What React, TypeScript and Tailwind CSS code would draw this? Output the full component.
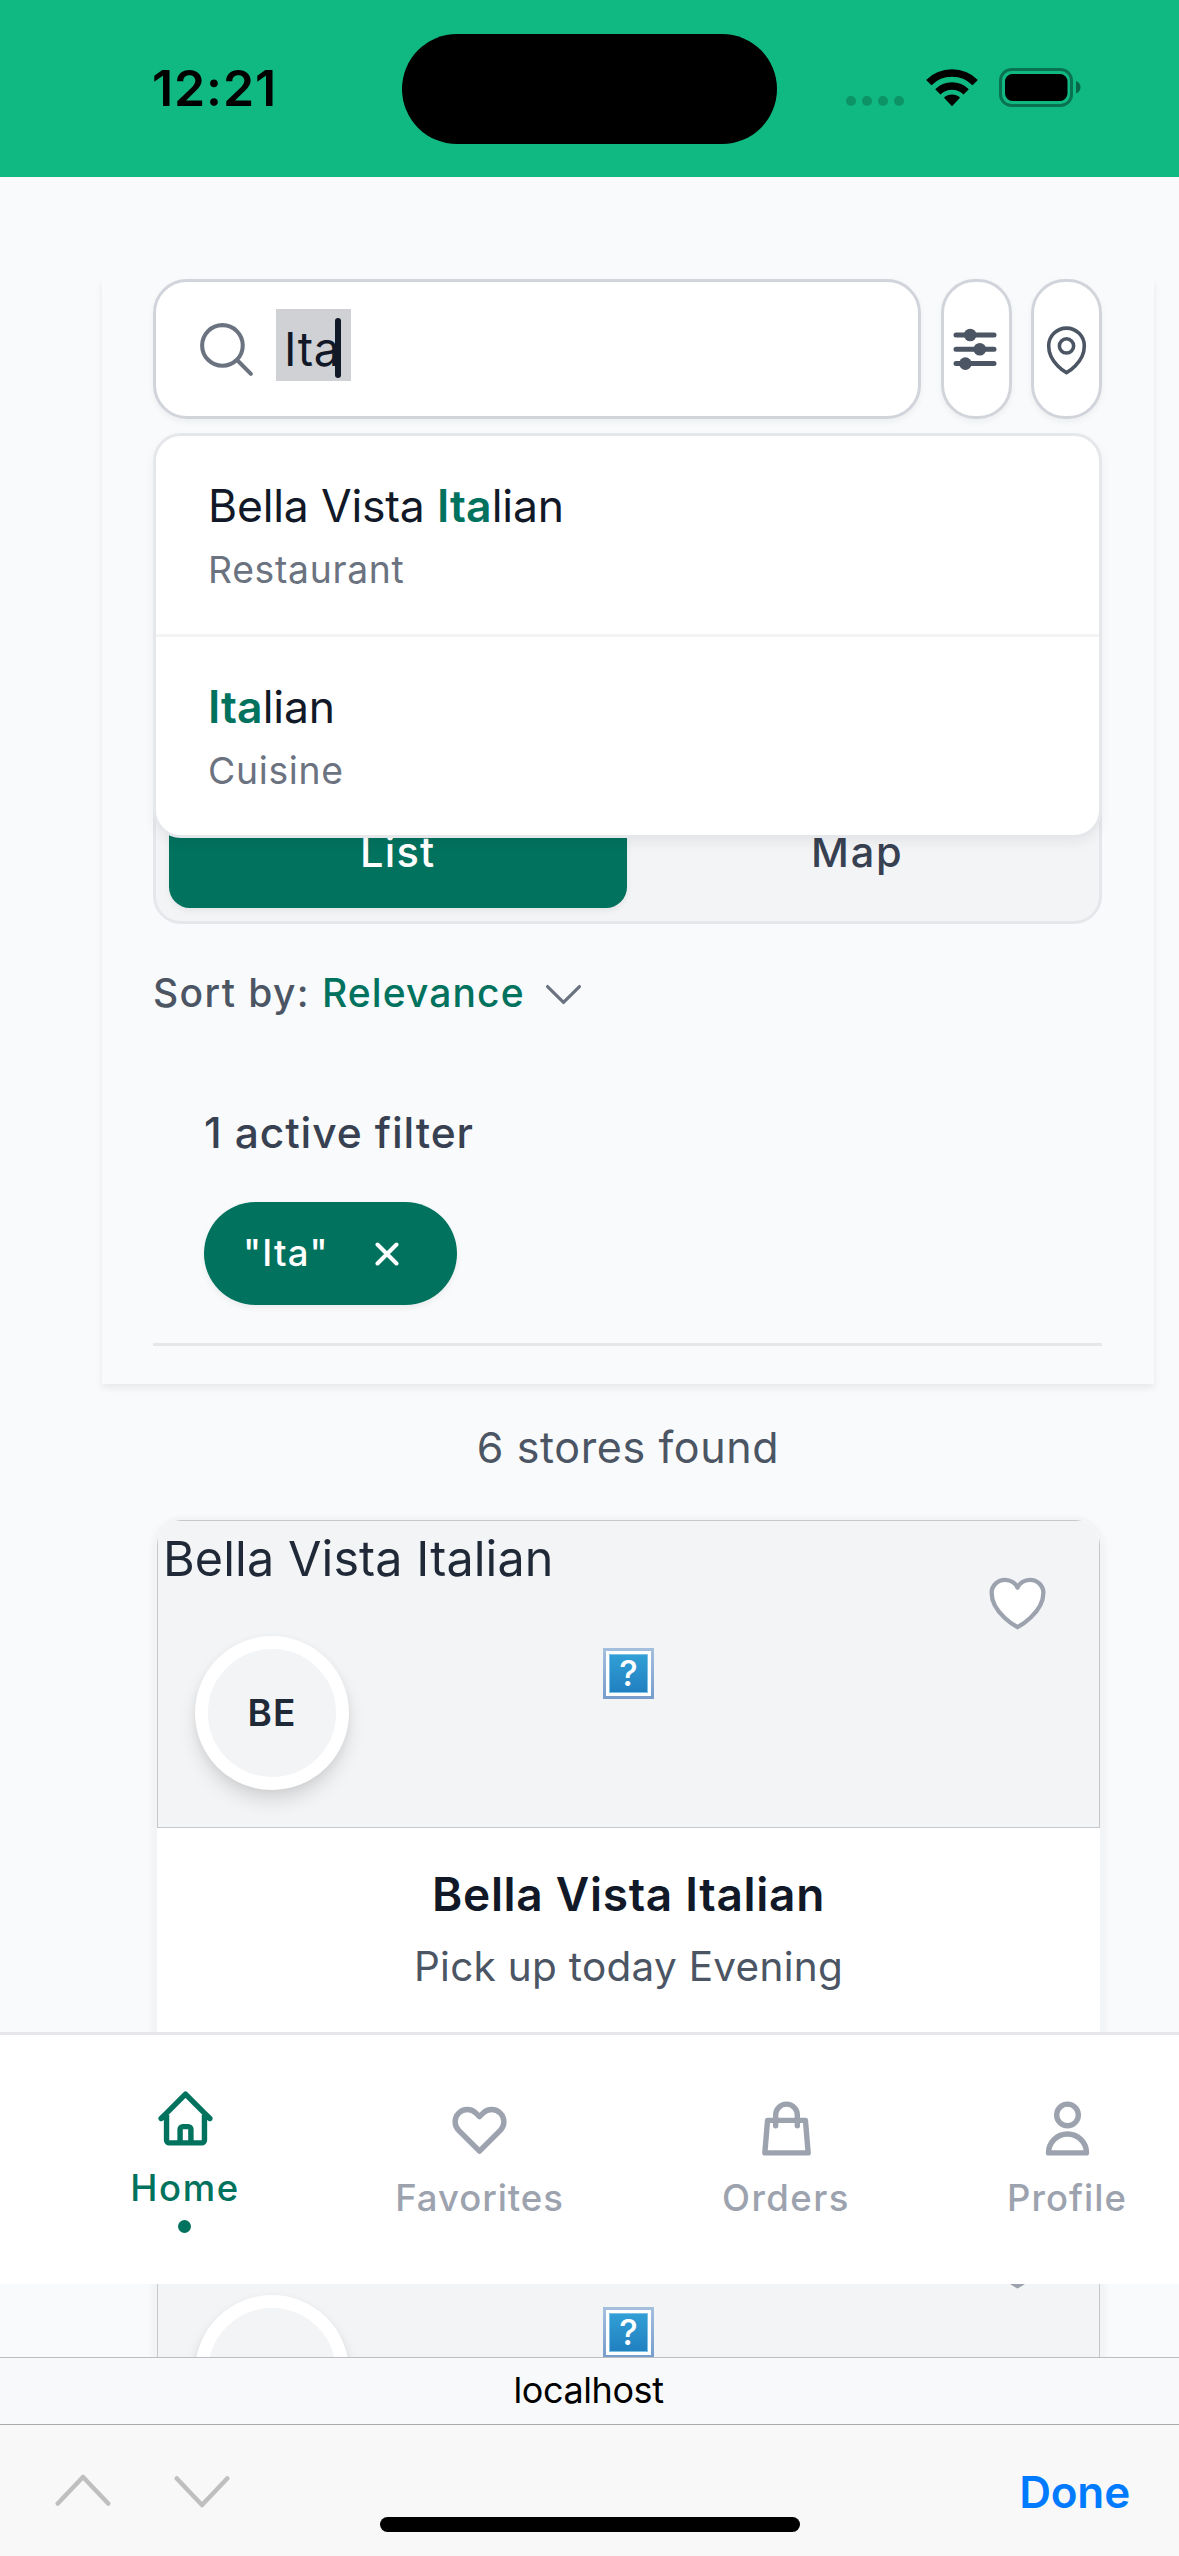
import type { ReactNode } from "react";

/* ---------- Status bar ---------- */

function StatusBar() {
  return (
    <header className="relative flex h-[177px] items-start bg-[#10b981] text-black">
      <span className="mt-[58px] ml-[152px] text-[50px] leading-[60px] font-semibold tracking-[0.9px]">12:21</span>
      <div className="absolute top-[34px] left-[402px] h-[110px] w-[375px] rounded-full bg-black" />
      <div className="mt-[68px] ml-auto flex h-[39px] items-start pr-[98px]">
        <div className="mt-[28px] mr-[22px] flex gap-[6px]">
          {[0, 1, 2, 3].map((i) => (
            <span key={i} className="size-[10px] rounded-full bg-black/20" />
          ))}
        </div>
        <svg width="52" height="38" viewBox="0 0 52 38" fill="none" className="mt-px mr-[21px]">
          <path d="M2.8 13.6A33 33 0 0 1 49.2 13.6" stroke="#000" strokeWidth="7.6" />
          <path d="M11.8 22.8A20.2 20.2 0 0 1 40.2 22.8" stroke="#000" strokeWidth="7.4" />
          <path d="M26 37.2L18 28.8A11.4 11.4 0 0 1 34 28.8Z" fill="#000" />
        </svg>
        <svg width="82" height="39" viewBox="0 0 82 39" fill="none">
          <rect x="1.5" y="1.5" width="71" height="36" rx="11" stroke="#000" strokeOpacity=".38" strokeWidth="3" />
          <rect x="6" y="6" width="62.5" height="27" rx="7.5" fill="#000" />
          <path d="M77 13C80 14 81.5 16.5 81.5 19.2S80 24.5 77 25.5Z" fill="#000" fillOpacity=".45" />
        </svg>
      </div>
    </header>
  );
}

/* ---------- Search ---------- */

function SearchRow() {
  return (
    <div className="flex h-[140px] gap-[19.5px]">
      <div className="flex flex-1 items-center rounded-[34px] border-[3px] border-[#d1d5db] bg-white pl-[38px] shadow-[0_3px_6px_rgba(0,0,0,0.05)]">
        <svg width="65" height="65" viewBox="0 0 24 24" fill="none" stroke="#6b7280" strokeWidth="1.5" strokeLinecap="round" strokeLinejoin="round">
          <path d="m21 21-5.197-5.197m0 0A7.5 7.5 0 1 0 5.196 5.196a7.5 7.5 0 0 0 10.607 10.607Z" />
        </svg>
        <div className="relative mb-[8px] ml-[17px] h-[72px] w-[75px] bg-[#d0d1d5] pl-[8px] text-[46.5px] leading-[80px] tracking-[0.6px] text-[#111827]">
          Ita
          <span className="absolute top-[9px] left-[59px] h-[60px] w-[6px] rounded-full bg-[#111827]" />
        </div>
      </div>
      <button className="flex w-[71px] items-center justify-center rounded-[34px] border-[3px] border-[#d1d5db] bg-white shadow-[0_3px_6px_rgba(0,0,0,0.05)]">
        <svg width="44" height="44" viewBox="0 0 44 44" className="mr-[2px] shrink-0" stroke="#4b5563" strokeWidth="5" strokeLinecap="round" fill="#4b5563">
          <path d="M3 8H41M3 22.3H41M3 36.6H41" />
          <g stroke="none">
            <circle cx="17.2" cy="8" r="6.3" />
            <circle cx="26.8" cy="22.3" r="6.3" />
            <circle cx="12.4" cy="36.6" r="6.3" />
          </g>
        </svg>
      </button>
      <button className="flex w-[71px] items-center justify-center rounded-[34px] border-[3px] border-[#d1d5db] bg-white shadow-[0_3px_6px_rgba(0,0,0,0.05)]">
        <svg width="57" height="57" viewBox="0 0 24 24" className="shrink-0" fill="none" stroke="#4b5563" strokeWidth="1.5" strokeLinecap="round" strokeLinejoin="round">
          <path d="M15 10.5a3 3 0 1 1-6 0 3 3 0 0 1 6 0Z" />
          <path d="M19.5 10.5c0 7.142-7.5 11.25-7.5 11.25S4.5 17.642 4.5 10.5a7.5 7.5 0 1 1 15 0Z" />
        </svg>
      </button>
    </div>
  );
}

function Suggestion({ title, kind }: { title: ReactNode; kind: string }) {
  return (
    <li className="box-content h-[160px] pt-[38px] pl-[52px]">
      <p className="text-[44.5px] leading-[64px] tracking-[-0.2px] text-[#111827]">{title}</p>
      <p className="mt-[5px] text-[37.3px] leading-[54px] tracking-[0.7px] text-[#6b7280]">{kind}</p>
    </li>
  );
}

function Hit({ children }: { children: ReactNode }) {
  return <b className="font-semibold tracking-[0.1px] text-[#00725e]">{children}</b>;
}

function Suggestions() {
  return (
    <ul className="absolute inset-x-0 top-[154px] z-10 divide-y-[3px] divide-[#f3f4f6] rounded-[28px] border-[3px] border-[#e5e7eb] bg-white shadow-[0_6px_12px_rgba(0,0,0,0.05)]">
      <Suggestion title={<>Bella Vista <Hit>Ita</Hit>lian</>} kind="Restaurant" />
      <Suggestion title={<><Hit>Ita</Hit>lian</>} kind="Cuisine" />
    </ul>
  );
}

/* ---------- Filter panel ---------- */

function FilterPanel() {
  return (
    <section className="pr-[52px] pl-[51px] pb-[38px] shadow-[0_4px_7px_rgba(0,0,0,0.07)]">
      <div className="relative">
        <SearchRow />
        <Suggestions />
      </div>

      <div className="mt-[361px] flex h-[144px] rounded-[28px] border-[3px] border-[#e5e7eb] bg-[#f3f4f6] p-[13px] text-[41.5px] leading-[112px] font-medium">
        <button className="flex-1 rounded-[21px] bg-[#00725e] tracking-[1.24px] text-white shadow-[0_3px_6px_rgba(0,0,0,0.06)]">List</button>
        <button className="flex-1 pl-[2px] tracking-[1.8px] text-[#374151]">Map</button>
      </div>

      <div className="mt-[39px] flex h-[60px] items-center text-[39px] leading-[60px] font-medium">
        <span className="tracking-[1.4px] text-[#4b5563]">Sort by:</span>
        <span className="ml-[12px] tracking-[1.1px] text-[#00725e]">Relevance</span>
        <svg width="51" height="51" viewBox="0 0 24 24" className="mt-[2px] ml-[13px]" fill="none" stroke="#6b7280" strokeWidth="1.5" strokeLinecap="round" strokeLinejoin="round">
          <path d="m19.5 8.25-7.5 7.5-7.5-7.5" />
        </svg>
      </div>

      <div className="mt-[80px] border-b-[3px] border-[#e5e7eb] pb-[38px] pl-[51px]">
        <h2 className="text-[42.5px] leading-[60px] font-medium tracking-[0.9px] text-[#374151]">1 active filter</h2>
        <div className="mt-[39px] flex h-[103px] w-[253px] items-center rounded-full bg-[#00725e] pl-[39px] text-white shadow-[0_3px_6px_rgba(0,0,0,0.06)]">
          <span className="text-[36.5px] font-medium tracking-[1.25px]">"Ita"</span>
          <svg width="24" height="24" viewBox="0 0 24 24" className="ml-[46px]" stroke="#fff" strokeWidth="4" strokeLinecap="round">
            <path d="M2.5 2.5L21.5 21.5M21.5 2.5L2.5 21.5" />
          </svg>
        </div>
      </div>
    </section>
  );
}

/* ---------- Store cards ---------- */

function MissingImage() {
  return (
    <div className="mb-[2px] size-[51px] bg-linear-to-b from-[#a5c0df] to-[#769ccb] p-[3px]">
      <div className="size-full bg-white p-[3px]">
        <div className="flex size-full items-center justify-center border border-[#7cc0e4] bg-linear-to-b from-[#329fd6] to-[#2180c0] text-[35px] leading-none font-medium text-white">
          ?
        </div>
      </div>
    </div>
  );
}

function StoreCard({ name, initials, pickup }: { name: string; initials: string; pickup: string }) {
  return (
    <article className="h-[611px] overflow-hidden rounded-[28px] border-[3px] border-[#f3f4f6] bg-white shadow-[0_3px_8px_rgba(0,0,0,0.06)]">
      <div className="relative flex h-[308px] items-center justify-center border border-[#c6c7c9] bg-[#f3f4f6]">
        <span className="absolute top-0 left-[5px] text-[48.5px] leading-[76px] tracking-[0.1px] text-[#1f2937]">{name}</span>
        <MissingImage />
        <svg width="69" height="69" viewBox="0 0 24 24" className="absolute top-[48px] right-[47px]" fill="#fff" stroke="#9ca3af" strokeWidth="1.5" strokeLinecap="round" strokeLinejoin="round">
          <path d="M21 8.25c0-2.485-2.099-4.5-4.688-4.5-1.935 0-3.597 1.126-4.312 2.733-.715-1.607-2.377-2.733-4.313-2.733C5.1 3.75 3 5.765 3 8.25c0 7.22 9 12 9 12s9-4.78 9-12Z" />
        </svg>
        <div className="absolute bottom-[37px] left-[37px] flex size-[154px] items-center justify-center rounded-full border-[13px] border-white bg-[#f3f4f6] text-[37px] font-semibold tracking-[1px] text-[#1f2937] shadow-[0_12px_18px_rgba(0,0,0,0.1),0_3px_9px_rgba(0,0,0,0.06)]">
          {initials}
        </div>
      </div>
      <div className="pt-[36px] text-center">
        <h3 className="text-[46px] leading-[60px] font-semibold tracking-[0.7px] text-[#111827]">{name}</h3>
        <p className="mt-[16px] text-[40.5px] leading-[54px] tracking-[0.28px] text-[#4b5563]">{pickup}</p>
      </div>
    </article>
  );
}

/* ---------- Bottom navigation ---------- */

function NavIcon({ d }: { d: string }) {
  return (
    <svg width="65" height="65" viewBox="0 0 24 24" fill="none" stroke="currentColor" strokeWidth="2" strokeLinecap="round" strokeLinejoin="round">
      <path d={d} />
    </svg>
  );
}

const tabs = [
  {
    label: "Home",
    width: "w-[110px] tracking-[1.62px]",
    d: "M3 12l2-2m0 0l7-7 7 7M5 10v10a1 1 0 001 1h3m10-11l2 2m-2-2v10a1 1 0 01-1 1h-3m-6 0a1 1 0 001-1v-4a1 1 0 011-1h2a1 1 0 011 1v4a1 1 0 001 1m-6 0h6",
    active: true,
  },
  {
    label: "Favorites",
    width: "w-[168px] pr-[3px] tracking-[0.94px]",
    d: "M4.318 6.318a4.5 4.5 0 000 6.364L12 20.364l7.682-7.682a4.5 4.5 0 00-6.364-6.364L12 7.636l-1.318-1.318a4.5 4.5 0 00-6.364 0z",
  },
  { label: "Orders", width: "w-[128px] tracking-[1.44px]", d: "M16 11V7a4 4 0 00-8 0v4M5 9h14l1 12H4L5 9z" },
  {
    label: "Profile",
    width: "w-[120px] tracking-[1.06px]",
    d: "M16 7a4 4 0 11-8 0 4 4 0 018 0zM12 14a7 7 0 00-7 7h14a7 7 0 00-7-7z",
  },
];

function TabBar() {
  return (
    <nav className="absolute inset-x-0 top-[2032px] z-20 flex h-[252px] items-start gap-[157px] border-t-[3px] border-[#e5e7eb] bg-white pt-[51px] pl-[130px]">
      {tabs.map((t) => (
        <a
          key={t.label}
          className={`flex shrink-0 flex-col items-center text-[36.5px] leading-[48px] font-medium whitespace-nowrap ${t.width} ${
            t.active ? "text-[#00725e]" : "mt-[10px] text-[#9ca3af]"
          }`}
        >
          <NavIcon d={t.d} />
          <span className="mt-[13px]">{t.label}</span>
          {t.active && <span className="mt-[8px] mr-px size-[13px] rounded-full bg-[#00725e]" />}
        </a>
      ))}
    </nav>
  );
}

/* ---------- Browser chrome ---------- */

function BrowserBar() {
  return (
    <footer className="absolute inset-x-0 top-[2357px] z-20 h-[199px]">
      <div className="h-[67px] border-t border-[#bcbdc0] bg-[#f8f9fb] pr-[2px] text-center text-[36px] leading-[65px] tracking-[-0.4px] text-black">
        localhost
      </div>
      <div className="relative flex h-[132px] items-center border-t border-[#a9aaac] bg-[#f8f8f8] pr-[49px] pl-[55px]">
        <svg width="56" height="34" viewBox="0 0 56 34" className="mt-[-2px]" fill="none" stroke="#bfbfbf" strokeWidth="4.5" strokeLinecap="round" strokeLinejoin="round">
          <path d="M2.8 30.5L28 4L53.2 30.5" />
        </svg>
        <svg width="56" height="34" viewBox="0 0 56 34" className="mt-[2px] ml-[63px]" fill="none" stroke="#bfbfbf" strokeWidth="4.5" strokeLinecap="round" strokeLinejoin="round">
          <path d="M2.8 3.5L28 30L53.2 3.5" />
        </svg>
        <button className="mt-[3px] ml-auto text-[44px] font-semibold tracking-[-0.16px] text-[#007aff]">Done</button>
        <div className="absolute bottom-[24px] left-[380px] h-[15px] w-[420px] rounded-full bg-black" />
      </div>
    </footer>
  );
}

export default function App() {
  return (
    <div className="relative h-[2556px] w-[1179px] overflow-hidden bg-[#f9fafc] font-['Inter',sans-serif]">
      <StatusBar />
      <main className="mt-[102px] ml-[102px] w-[1052px]">
        <FilterPanel />
        <p className="mt-[33px] text-center text-[43px] leading-[60px] tracking-[0.62px] text-[#4b5563]">6 stores found</p>
        <div className="mt-[40px] flex flex-col gap-[48px] pr-[51px] pl-[52px]">
          <StoreCard name="Bella Vista Italian" initials="BE" pickup="Pick up today Evening" />
          <StoreCard name="" initials="HO" pickup="" />
        </div>
      </main>
      <TabBar />
      <BrowserBar />
    </div>
  );
}
